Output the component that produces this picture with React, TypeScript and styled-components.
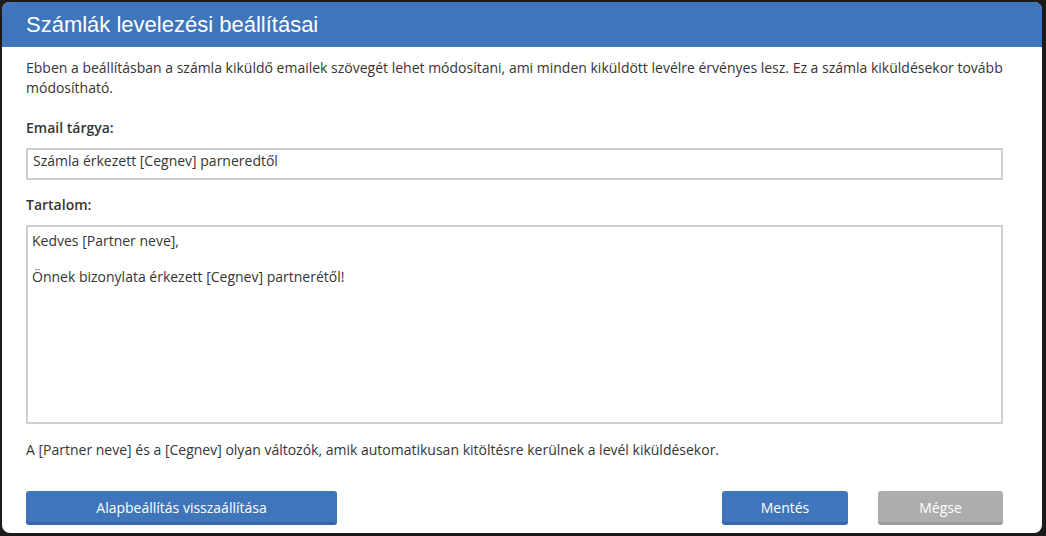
import React from 'react';
import styled, { createGlobalStyle } from 'styled-components';

const GlobalStyle = createGlobalStyle`
  html, body {
    margin: 0;
    padding: 0;
    background: #1b1b1b;
  }
  * {
    box-sizing: border-box;
  }
`;

const Page = styled.div`
  width: 1046px;
  height: 536px;
  padding: 2px 4px 3px 2px;
  display: flex;
`;

const Dialog = styled.div`
  flex: 1;
  display: flex;
  flex-direction: column;
  background: #ffffff;
  border-radius: 8px;
  overflow: hidden;
  font-family: 'Open Sans', 'Noto Sans', sans-serif;
  font-size: 14px;
  color: #353535;
`;

const Header = styled.header`
  height: 45px;
  flex: none;
  display: flex;
  align-items: center;
  padding: 0 24px;
  background: #3f75bb;
`;

const Title = styled.h1`
  margin: 0;
  font-family: 'Liberation Sans', Arial, sans-serif;
  font-weight: normal;
  font-size: 22px;
  color: #ffffff;
`;

const Body = styled.div`
  flex: 1;
  display: flex;
  flex-direction: column;
  padding: 11px 39px 0 24px;
`;

const Text = styled.p<{ $top?: number }>`
  margin: ${(p) => p.$top ?? 0}px 0 0;
  line-height: 20px;
`;

const Label = styled.label<{ $top: number }>`
  display: block;
  margin-top: ${(p) => p.$top}px;
  line-height: 20px;
  font-weight: 600;
`;

const Input = styled.input`
  display: block;
  width: 100%;
  height: 32px;
  margin-top: 10px;
  padding: 0 5px 8px;
  border: 2px solid #cfcfcf;
  border-radius: 0;
  outline: none;
  font-family: inherit;
  font-size: 14px;
  line-height: 20px;
  color: #353535;
`;

const TextArea = styled.textarea`
  display: block;
  width: 100%;
  height: 199px;
  margin-top: 10px;
  padding: 5px 4px;
  border: 2px solid #cfcfcf;
  border-radius: 0;
  outline: none;
  resize: none;
  font-family: inherit;
  font-size: 14px;
  line-height: 18px;
  color: #353535;
`;

const Actions = styled.div`
  display: flex;
  align-items: center;
  gap: 30px;
  margin-top: 31px;
`;

const Button = styled.button<{ $width: number; $gray?: boolean }>`
  width: ${(p) => p.$width}px;
  height: 34px;
  padding: 2px 0 0;
  border: none;
  border-bottom: 3px solid ${(p) => (p.$gray ? '#9c9c9c' : '#3667a8')};
  border-radius: 3px;
  background: ${(p) => (p.$gray ? '#adadad' : '#3f75bb')};
  color: #ffffff;
  font-family: inherit;
  font-size: 14px;
  cursor: pointer;
`;

const Spacer = styled.div`
  flex: 1;
`;

export default function App() {
  return (
    <>
      <GlobalStyle />
      <Page>
        <Dialog>
          <Header>
            <Title>Számlák levelezési beállításai</Title>
          </Header>
          <Body>
            <Text>
              Ebben a beállításban a számla kiküldő emailek szövegét lehet módosítani, ami minden
              kiküldött levélre érvényes lesz. Ez a számla kiküldésekor tovább módosítható.
            </Text>
            <Label $top={20}>Email tárgya:</Label>
            <Input defaultValue="Számla érkezett [Cegnev] parneredtől" />
            <Label $top={15}>Tartalom:</Label>
            <TextArea
              defaultValue={
                'Kedves [Partner neve],\n\nÖnnek bizonylata érkezett [Cegnev] partnerétől!'
              }
            />
            <Text $top={16}>
              A [Partner neve] és a [Cegnev] olyan változók, amik automatikusan kitöltésre
              kerülnek a levél kiküldésekor.
            </Text>
            <Actions>
              <Button $width={311}>Alapbeállítás visszaállítása</Button>
              <Spacer />
              <Button $width={126}>Mentés</Button>
              <Button $width={125} $gray>
                Mégse
              </Button>
            </Actions>
          </Body>
        </Dialog>
      </Page>
    </>
  );
}
